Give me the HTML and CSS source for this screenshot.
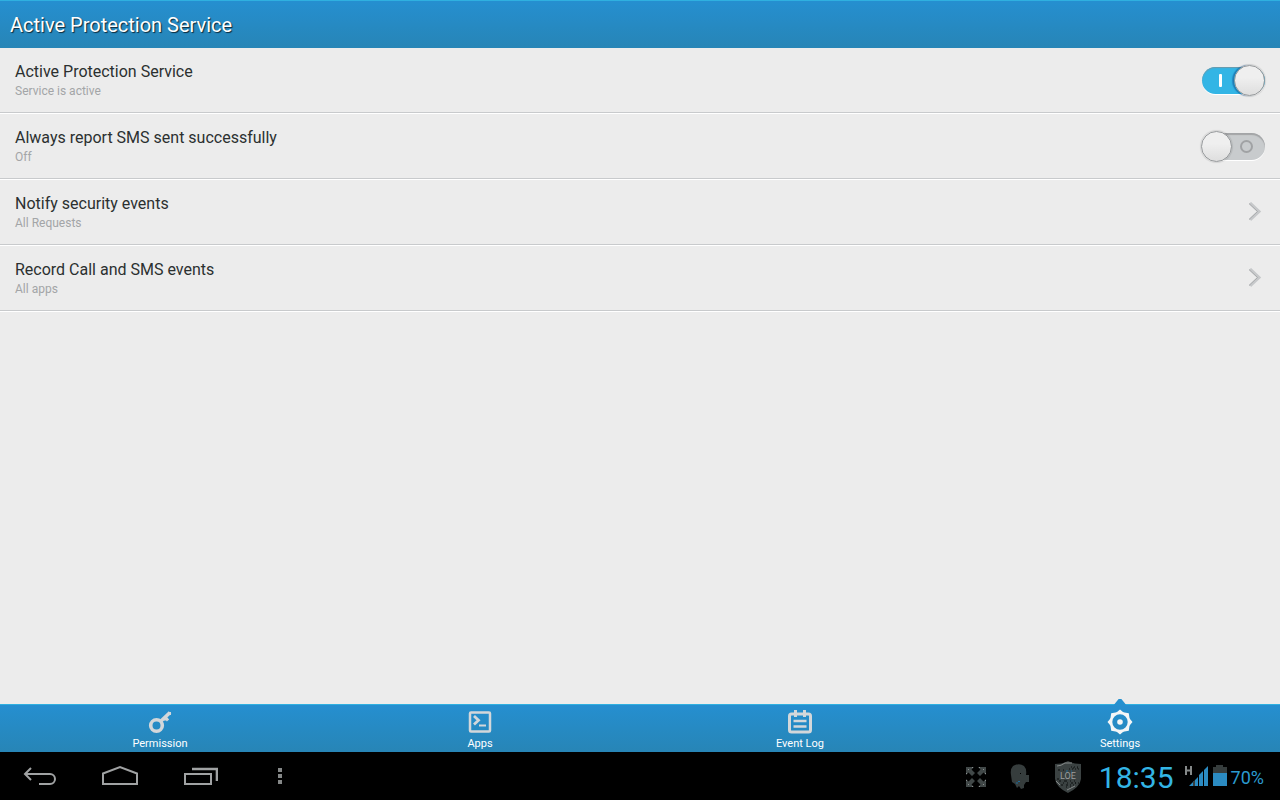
FILE: index.html
```html
<!DOCTYPE html>
<html lang="en">
<head>
    <meta charset="UTF-8">
    <meta name="viewport" content="width=device-width, initial-scale=1.0">
    <title>Active Protection Service</title>
    <link rel="stylesheet" href="styles.css">
</head>
<body>
    <!-- Title Bar -->
    <header class="title-bar">
        <h1>Active Protection Service</h1>
    </header>

    <!-- Settings List -->
    <main class="settings">
        <div class="setting">
            <label class="setting-text" for="protection">
                <span class="setting-title">Active Protection Service</span>
                <span class="setting-value">Service is active</span>
            </label>
            <input class="switch" type="checkbox" id="protection" checked>
        </div>
        <div class="setting">
            <label class="setting-text" for="reportSms">
                <span class="setting-title">Always report SMS sent successfully</span>
                <span class="setting-value">Off</span>
            </label>
            <input class="switch" type="checkbox" id="reportSms">
        </div>
        <button class="setting">
            <span class="setting-text">
                <span class="setting-title">Notify security events</span>
                <span class="setting-value">All Requests</span>
            </span>
            <svg class="chevron" width="14" height="20" viewBox="0 0 14 20">
                <path d="M2 2l9 8.500-9 8.500" stroke="#fff"/>
                <path d="M2 1l9 8.500-9 8.500" stroke="#c6c8ca" stroke-width="3"/>
                <path d="M1 1.500l8.500 8-8.500 8" stroke="#a9abad"/>
            </svg>
        </button>
        <button class="setting">
            <span class="setting-text">
                <span class="setting-title">Record Call and SMS events</span>
                <span class="setting-value">All apps</span>
            </span>
            <svg class="chevron" width="14" height="20" viewBox="0 0 14 20">
                <path d="M2 2l9 8.500-9 8.500" stroke="#fff"/>
                <path d="M2 1l9 8.500-9 8.500" stroke="#c6c8ca" stroke-width="3"/>
                <path d="M1 1.500l8.500 8-8.500 8" stroke="#a9abad"/>
            </svg>
        </button>
    </main>

    <!-- Tabs -->
    <nav class="tabs">
        <a class="tab" href="#permission">
            <svg width="24" height="24" viewBox="0 0 24 24" fill="none" stroke="#d3d7da">
                <circle cx="8.500" cy="15.500" r="5.800" stroke-width="3.600"/>
                <path d="M12.500 11.500L22 2.500" stroke-width="3.600"/>
                <path d="M17 7l3 3.500M16 8l2 2" stroke-width="3"/>
                <path d="M20 3.500h3" stroke-width="3"/>
            </svg>
            Permission
        </a>
        <a class="tab" href="#apps">
            <svg width="24" height="24" viewBox="0 0 24 24" fill="none" stroke="#d3d7da">
                <rect x="2" y="2.500" width="20" height="19" rx="1" stroke-width="2.500"/>
                <path d="M6 6l4.500 4.200-4.500 4.200" stroke-width="2.800"/>
                <path d="M11 15.500h7" stroke-width="2"/>
            </svg>
            Apps
        </a>
        <a class="tab" href="#log">
            <svg width="24" height="24" viewBox="0 0 24 24" fill="none" stroke="#d3d7da">
                <rect x="1.500" y="4" width="21" height="18" rx="2" stroke-width="3"/>
                <path d="M7.500 0v7M16.500 0v7" stroke-width="3"/>
                <path d="M5.500 11h13M5.500 16.500h13" stroke-width="2.600"/>
            </svg>
            Event Log
        </a>
        <a class="tab active" href="#settings">
            <svg width="26" height="26" viewBox="0 0 26 26">
                <path fill="#f4f6f7" fill-rule="evenodd" d="M13 0.500L16 3 17.500 3.600 21.800 4.200 22.400 8.500 23 10 25.500 13 23 16 22.400 17.500 21.800 21.800 17.500 22.400 16 23 13 25.500 10 23 8.500 22.400 4.200 21.800 3.600 17.500 3 16 0.500 13 3 10 3.600 8.500 4.200 4.200 8.500 3.600 10 3zM13 5.300a7.700 7.700 0 1 0 0 15.400a7.700 7.700 0 1 0 0-15.400z"/>
                <circle cx="13" cy="13" r="2.800" fill="#f4f6f7"/>
            </svg>
            Settings
        </a>
    </nav>

    <!-- System Bar -->
    <footer class="system-bar">
        <div class="nav-buttons">
            <button class="nav-button" aria-label="Back">
                <svg width="36" height="24" viewBox="0 0 36 24" fill="none" stroke="#a0a2a3" stroke-width="2">
                    <path d="M9 3L3 9l6 6M3 9h25a5 5 0 0 1 0 10H17"/>
                </svg>
            </button>
            <button class="nav-button" aria-label="Home">
                <svg width="40" height="24" viewBox="0 0 40 24" fill="none" stroke="#a0a2a3" stroke-width="2">
                    <path d="M3 19V8.500L20 2l17 6.500V19z"/>
                </svg>
            </button>
            <button class="nav-button" aria-label="Recent apps">
                <svg width="36" height="24" viewBox="0 0 36 24" fill="none" stroke="#a0a2a3" stroke-width="2">
                    <path d="M3 9h26v10H3z"/>
                    <path d="M10 4h25v12" stroke-width="2.600"/>
                </svg>
            </button>
            <button class="nav-button" aria-label="Menu">
                <svg width="6" height="24" viewBox="0 0 6 24" fill="#858888">
                    <path d="M1 3h4v4H1zM1 9h4v4H1zM1 15h4v4H1z"/>
                </svg>
            </button>
        </div>
        <div class="status">
            <svg width="20" height="20" viewBox="0 0 20 20">
                <path fill="#414848" d="M0 0h8L5.500 2.500 9 6 6 9 2.500 5.500 0 8zM20 0v8l-2.500-2.500L14 9l-3-3 3.500-3.500L12 0zM0 20v-8l2.500 2.500L6 11l3 3-3.500 3.500L8 20zM20 20h-8l2.500-2.500L11 14l3-3 3.500 3.500L20 12z"/>
                <path fill="#8a8e8e" d="M6 0h1v1H6zM0 6h1v1H0zM2 2h1v1H2zM13 0h1v1h-1zM19 6h1v1h-1zM17 2h1v1h-1zM0 13h1v1H0zM6 19h1v1H6zM2 17h1v1H2zM19 13h1v1h-1zM13 19h1v1h-1zM17 17h1v1h-1z"/>
            </svg>
            <svg width="20" height="26" viewBox="0 0 20 26">
                <path fill="#363d3d" d="M5 1Q10-1 14 2Q17 5 16 11H19V18H16L14 21V24L11 25L9 22L7 24L5 20L2 18L1 11Q0 5 3 2z"/>
                <path fill="#000" d="M10 9h1v1h-1z"/>
                <path stroke="#1c6c9c" d="M6 19h2M8 17.500h2"/>
            </svg>
            <svg width="28" height="32" viewBox="0 0 28 32">
                <path fill="#3b4242" d="M14 0Q19 3 27 3V18Q26 26 14 32Q2 26 1 18V3Q9 3 14 0z"/>
                <g fill="none" stroke="#0b0d0d">
                    <path d="M17 6h8M15 8h10M18 22h7M16 24h6" stroke-dasharray="1 2"/>
                    <path d="M19 7h6M12 20h12M9 22h14M12 26h6" stroke-dasharray="1 3"/>
                    <path d="M4 9h6M5 20h8M7 24h10M3 18h3" stroke-dasharray="2 3"/>
                </g>
                <path fill="none" stroke="#858989" d="M3 5Q7 5 11 2H18M2 20L6 24M13 29L21 25"/>
                <text class="shield-text" x="14" y="18" text-anchor="middle">LOE</text>
                <path stroke="#1c6c9c" d="M12 10h2M17 10h1"/>
            </svg>
            <span class="clock">18:35</span>
            <svg width="42" height="24" viewBox="0 0 42 24">
                <path fill="none" stroke="#858989" stroke-width="2" d="M1 1v9M6 1v9M1 5.500h5"/>
                <path fill="#2b8bc2" d="M4 21L9 16V21zM10 15L13 12V21H10zM14 10L18 6V21H14zM19 5L23 1V21H19z"/>
                <path fill="#363d3d" d="M8 17L10 15V21H8zM31 0h7v2h4v7H28V2h3z"/>
                <path fill="#2b8bc2" d="M28 8h14v13H28z"/>
            </svg>
            <span class="battery">70%</span>
        </div>
    </footer>
</body>
</html>
```

FILE: styles.css
```css
*,
*::before,
*::after {
    box-sizing: border-box;
    margin: 0;
    padding: 0;
}

body {
    font-family: Roboto, "Liberation Sans", sans-serif;
    display: flex;
    flex-direction: column;
    min-height: 100vh;
    background: #ececec;
    color: #2b3030;
}

button {
    font: inherit;
    color: inherit;
    background: none;
    border: none;
    cursor: pointer;
}

/* Title Bar */
.title-bar {
    height: 48px;
    padding: 0 10px;
    display: flex;
    align-items: center;
    background: linear-gradient(#258fd0, #2785b6);
    border-top: 1px solid #2fb0e0;
}

.title-bar h1 {
    font-size: 20px;
    font-weight: 400;
    color: #fff;
    text-shadow: 1px 1px 1px rgba(0, 0, 0, 0.7);
}

/* Settings List */
.settings {
    flex: 1;
}

.setting {
    width: 100%;
    display: flex;
    align-items: center;
    justify-content: space-between;
    padding: 0 15px;
    text-align: left;
    border-bottom: 1px solid #c8cacc;
    box-shadow: 0 1px 0 #fff;
    margin-bottom: 1px;
}

.setting-text {
    flex: 1;
    display: flex;
    flex-direction: column;
    padding: 12px 0 14px;
}

.setting-title {
    font-size: 16px;
    line-height: 24px;
}

.setting-value {
    font-size: 12px;
    line-height: 14px;
    color: #a3a5a7;
}

.chevron {
    margin-right: 3px;
    fill: none;
}

/* Switch */
.switch {
    appearance: none;
    position: relative;
    width: 63px;
    height: 27px;
    border-radius: 14px;
    background: #c8cbcd;
    box-shadow: inset 0 2px 1px #a3a5a7, 0 1px 0 #fff;
    cursor: pointer;
}

.switch::before {
    content: "";
    position: absolute;
    top: -2px;
    left: -1px;
    width: 31px;
    height: 31px;
    border: 1px solid #96999b;
    border-radius: 50%;
    background: linear-gradient(#efefef 40%, #dedede);
    box-shadow: 0 0 1px 1px rgba(0, 0, 0, 0.1);
}

.switch::after {
    content: "";
    position: absolute;
    top: 7px;
    left: 38px;
    width: 13px;
    height: 13px;
    border: 2px solid #a0a2a4;
    border-radius: 50%;
}

.switch:checked {
    background: #33b5e5;
    box-shadow: inset 0 1px 1px #6d99aa, 0 1px 0 #fff;
}

.switch:checked::before {
    left: 32px;
    box-shadow: 0 0 1px 1px rgba(0, 0, 0, 0.1), -2px 0 1px rgba(20, 90, 160, 0.5);
}

.switch:checked::after {
    left: 17px;
    width: 3px;
    border: none;
    border-radius: 1px;
    background: #fff;
}

/* Tabs */
.tabs {
    display: flex;
    height: 48px;
    background: linear-gradient(#258fd0, #2785b6);
    border-top: 1px solid #2fb0e0;
}

.tab {
    flex: 1;
    position: relative;
    display: flex;
    flex-direction: column;
    align-items: center;
    justify-content: space-between;
    padding: 5px 0 2px;
    font-size: 11px;
    line-height: 13px;
    color: #fff;
    text-decoration: none;
}

.tab.active {
    padding-top: 4px;
}

.tab.active::before {
    content: "";
    position: absolute;
    top: -6px;
    left: calc(50% - 7px);
    width: 14px;
    height: 7px;
    background: #2590cf;
    clip-path: polygon(0 100%, 40% 0, 60% 0, 100% 100%);
}

/* System Bar */
.system-bar {
    display: flex;
    align-items: center;
    justify-content: space-between;
    height: 48px;
    padding-right: 16px;
    background: #000;
}

.nav-buttons,
.status {
    display: flex;
    align-items: center;
}

.nav-button {
    width: 80px;
    height: 48px;
    padding-top: 2px;
    display: flex;
    align-items: center;
    justify-content: center;
}

.status {
    gap: 24px;
    padding-top: 2px;
}

.clock {
    font-size: 30px;
    color: #33b5e5;
    margin-left: -7px;
}

.battery {
    font-size: 18px;
    color: #2b9bd0;
    margin-left: -20px;
}

.status .clock + svg {
    margin-left: -13px;
}

.shield-text {
    font-size: 9px;
    fill: #9a9e9e;
}
```
